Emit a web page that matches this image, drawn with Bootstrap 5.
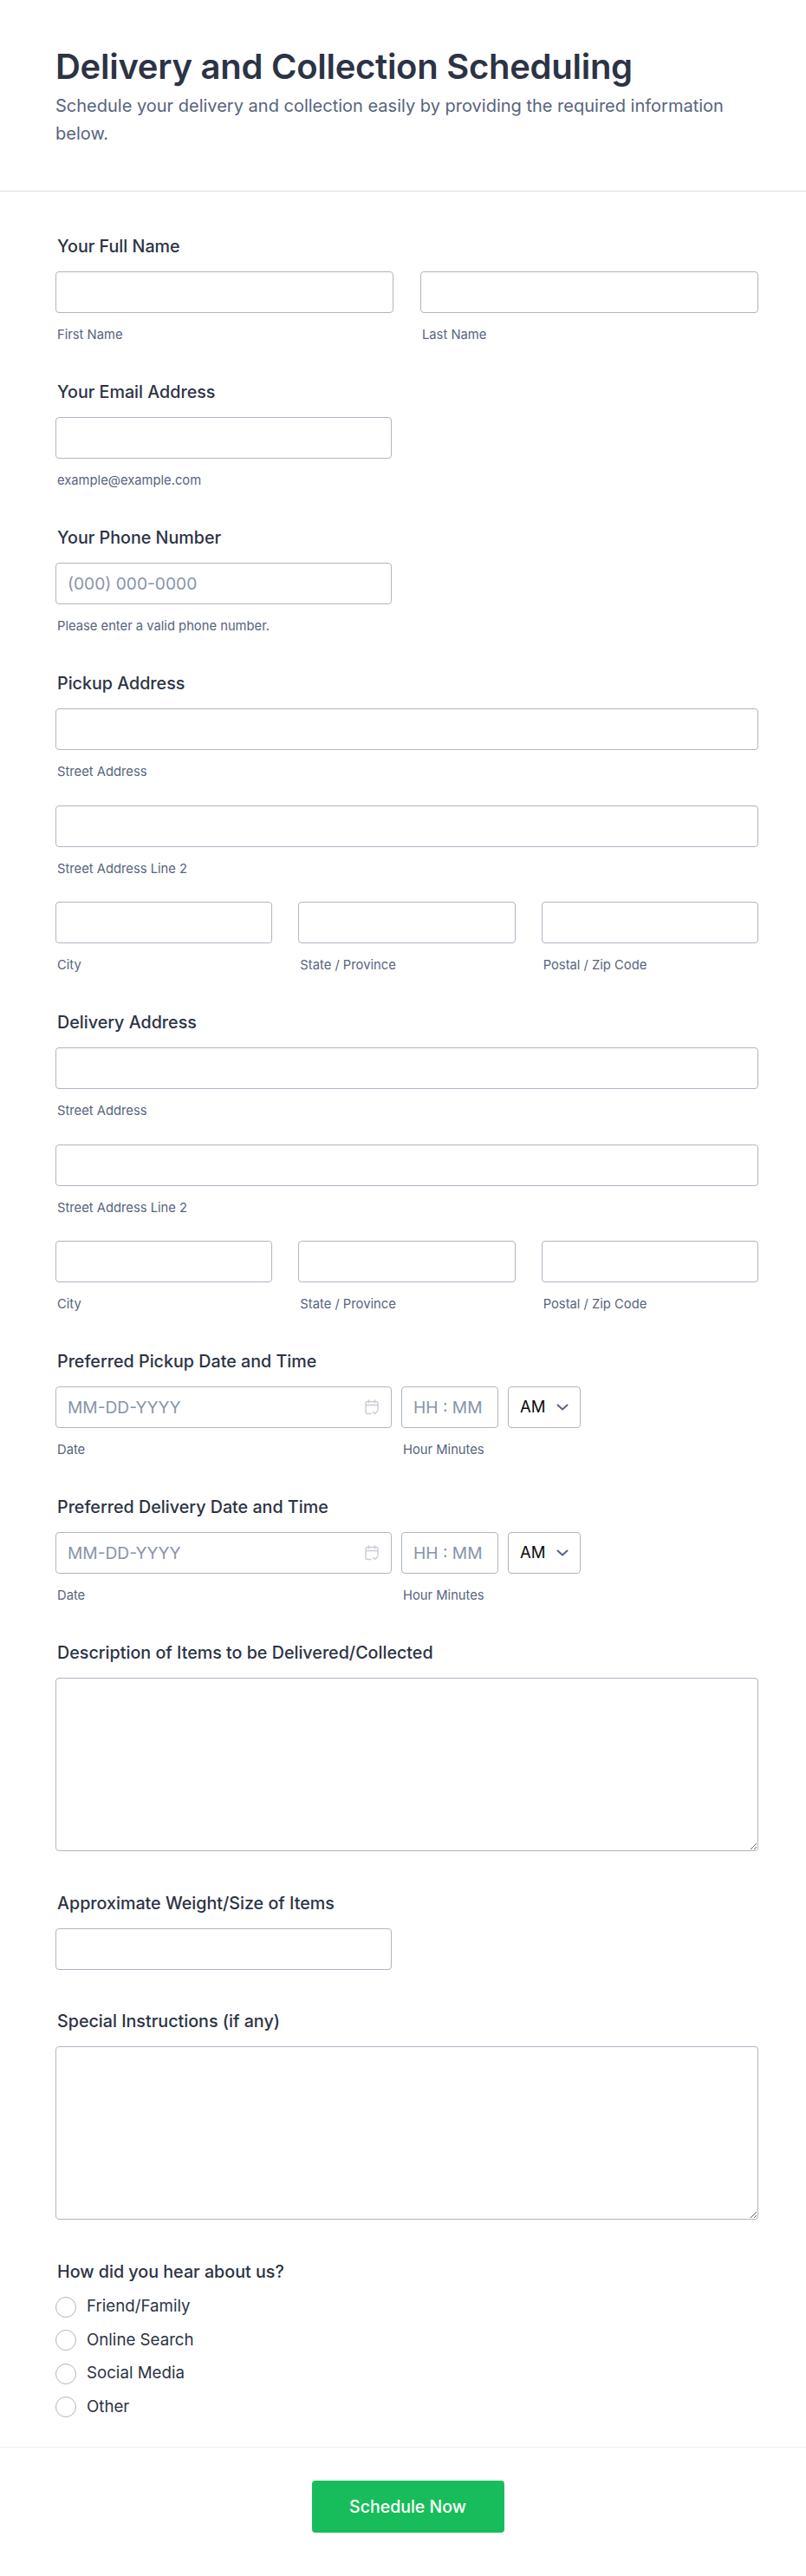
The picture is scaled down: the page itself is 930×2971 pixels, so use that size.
<!DOCTYPE html>
<html lang="en">

<head>
    <meta charset="UTF-8">
    <meta name="viewport" content="width=device-width, initial-scale=1.0">
    <title>Delivery and Collection Scheduling</title>
    <link href="https://cdn.jsdelivr.net/npm/bootstrap@5.3.2/dist/css/bootstrap.min.css" rel="stylesheet">
    <style>
        body { font-family: Inter, "Liberation Sans", sans-serif; color: #2c3345; background: #fff; }
        .form-head { height: 221px; padding: 49px 64px 0; border-bottom: 1px solid #dcdeea; }
        .form-head h1 { font-size: 40px; font-weight: 600; letter-spacing: -0.27px; line-height: 56px; margin: 0 0 1px; color: #2c3345; }
        .form-head p { font-size: 20px; line-height: 32px; margin: 0; color: #57647e; }
        .form-body { padding: 49px 55px 34px 64px; }
        .field { margin-bottom: 42px; }
        .field-bare { margin-bottom: 45.5px; }
        .field-last { margin-bottom: 0; }
        .field-label { display: block; font-size: 19.7px; font-weight: 450; line-height: 28px; margin: 0 0 15px 2px; color: #2c3345; }
        .form-control, .form-select { height: 48px; border: 1px solid #b0b5c3; border-radius: 4px; font-size: 19.2px; color: #2c3345; box-shadow: none; }
        .form-control { padding: 0 13px; }
        .form-control::placeholder { color: #8894ab; }
        textarea.form-control { height: 200px; }
        .half { width: 388px; }
        .sub-label { display: block; font-size: 14.75px; line-height: 20px; margin: 15px 0 0 2px; color: #57647e; }
        .addr-row { margin-bottom: 28.5px; }
        .gut-name { --bs-gutter-x: 31px; }
        .gut-city { --bs-gutter-x: 30px; }
        .date-time { gap: 11px; }
        .date-wrap { width: 388px; }
        .date-icon { right: 15px; top: 15px; width: 16px; height: 18px; }
        .time-wrap { width: 112px; }
        .ampm { width: 84px; font-size: 18.5px; color: #0b0b0b; padding: 0 0 0 13px; background-position: right 12px center; background-size: 16px 16px; background-image: url("data:image/svg+xml,%3csvg xmlns='http://www.w3.org/2000/svg' viewBox='0 0 16 16'%3e%3cpath fill='none' stroke='%2357647e' stroke-width='2' stroke-linecap='round' stroke-linejoin='round' d='M2.500 5.500l5.500 5 5.500-5'/%3e%3c/svg%3e"); }
        .radio-list { margin-top: 1px; }
        .radio-line { display: flex; align-items: center; gap: 12px; height: 24px; margin-bottom: 14.5px; padding: 0; font-size: 18.7px; }
        .radio-line:last-child { margin-bottom: 0; }
        .radio-line .form-check-input { width: 24px; height: 24px; margin: 0; border: 1px solid #b0b5c3; float: none; }
        .radio-line label { color: #2c3345; }
        .form-foot { border-top: 1px solid #eeeff6; padding: 38px 0 49px 11px; text-align: center; }
        .btn-send { width: 222px; height: 60px; padding-top: 8px; background: #18bd5b; border: 0; border-radius: 4px; color: #fff; font-size: 19.5px; font-weight: 500; }
        .btn-send:hover { background: #16a951; color: #fff; }
    </style>
</head>

<body>
    <div class="form-head">
        <h1>Delivery and Collection Scheduling</h1>
        <p>Schedule your delivery and collection easily by providing the required information below.</p>
    </div>

    <div class="form-body">
        <div class="field">
            <label class="field-label">Your Full Name</label>
            <div class="row gut-name">
                <div class="col-6">
                    <input type="text" class="form-control">
                    <span class="sub-label">First Name</span>
                </div>
                <div class="col-6">
                    <input type="text" class="form-control">
                    <span class="sub-label">Last Name</span>
                </div>
            </div>
        </div>

        <div class="field">
            <label class="field-label">Your Email Address</label>
            <input type="email" class="form-control half">
            <span class="sub-label">example@example.com</span>
        </div>

        <div class="field">
            <label class="field-label">Your Phone Number</label>
            <input type="tel" class="form-control half" placeholder="(000) 000-0000">
            <span class="sub-label">Please enter a valid phone number.</span>
        </div>

        <div class="field">
            <label class="field-label">Pickup Address</label>
            <div class="addr-row">
                <input type="text" class="form-control">
                <span class="sub-label">Street Address</span>
            </div>
            <div class="addr-row">
                <input type="text" class="form-control">
                <span class="sub-label">Street Address Line 2</span>
            </div>
            <div class="row gut-city">
                <div class="col-4">
                    <input type="text" class="form-control">
                    <span class="sub-label">City</span>
                </div>
                <div class="col-4">
                    <input type="text" class="form-control">
                    <span class="sub-label">State / Province</span>
                </div>
                <div class="col-4">
                    <input type="text" class="form-control">
                    <span class="sub-label">Postal / Zip Code</span>
                </div>
            </div>
        </div>

        <div class="field">
            <label class="field-label">Delivery Address</label>
            <div class="addr-row">
                <input type="text" class="form-control">
                <span class="sub-label">Street Address</span>
            </div>
            <div class="addr-row">
                <input type="text" class="form-control">
                <span class="sub-label">Street Address Line 2</span>
            </div>
            <div class="row gut-city">
                <div class="col-4">
                    <input type="text" class="form-control">
                    <span class="sub-label">City</span>
                </div>
                <div class="col-4">
                    <input type="text" class="form-control">
                    <span class="sub-label">State / Province</span>
                </div>
                <div class="col-4">
                    <input type="text" class="form-control">
                    <span class="sub-label">Postal / Zip Code</span>
                </div>
            </div>
        </div>

        <div class="field">
            <label class="field-label">Preferred Pickup Date and Time</label>
            <div class="d-flex date-time align-items-start">
                <div class="date-wrap position-relative">
                    <input type="text" class="form-control" placeholder="MM-DD-YYYY">
                    <svg class="date-icon position-absolute" viewBox="0 0 16 18" fill="none" stroke="#c8ccd6" stroke-width="1.400" stroke-linecap="round" stroke-linejoin="round"><path d="M7 16.500H3a2 2 0 0 1-2-2V4.500a2 2 0 0 1 2-2h10a2 2 0 0 1 2 2v7M1 6.500h14M4.500 .7v3M11.500 .7v3M9.500 14.500l2 2 3.500-3.500"/></svg>
                    <span class="sub-label">Date</span>
                </div>
                <div class="time-wrap">
                    <input type="text" class="form-control" placeholder="HH : MM">
                    <span class="sub-label">Hour Minutes</span>
                </div>
                <select class="form-select ampm">
                    <option>AM</option>
                    <option>PM</option>
                </select>
            </div>
        </div>

        <div class="field">
            <label class="field-label">Preferred Delivery Date and Time</label>
            <div class="d-flex date-time align-items-start">
                <div class="date-wrap position-relative">
                    <input type="text" class="form-control" placeholder="MM-DD-YYYY">
                    <svg class="date-icon position-absolute" viewBox="0 0 16 18" fill="none" stroke="#c8ccd6" stroke-width="1.400" stroke-linecap="round" stroke-linejoin="round"><path d="M7 16.500H3a2 2 0 0 1-2-2V4.500a2 2 0 0 1 2-2h10a2 2 0 0 1 2 2v7M1 6.500h14M4.500 .7v3M11.500 .7v3M9.500 14.500l2 2 3.500-3.500"/></svg>
                    <span class="sub-label">Date</span>
                </div>
                <div class="time-wrap">
                    <input type="text" class="form-control" placeholder="HH : MM">
                    <span class="sub-label">Hour Minutes</span>
                </div>
                <select class="form-select ampm">
                    <option>AM</option>
                    <option>PM</option>
                </select>
            </div>
        </div>

        <div class="field-bare">
            <label class="field-label">Description of Items to be Delivered/Collected</label>
            <textarea class="form-control"></textarea>
        </div>

        <div class="field-bare">
            <label class="field-label">Approximate Weight/Size of Items</label>
            <input type="text" class="form-control half">
        </div>

        <div class="field-bare">
            <label class="field-label">Special Instructions (if any)</label>
            <textarea class="form-control"></textarea>
        </div>

        <div class="field-last">
            <label class="field-label">How did you hear about us?</label>
            <div class="radio-list">
                <div class="radio-line form-check">
                    <input class="form-check-input" type="radio" name="heard" id="r1">
                    <label for="r1">Friend/Family</label>
                </div>
                <div class="radio-line form-check">
                    <input class="form-check-input" type="radio" name="heard" id="r2">
                    <label for="r2">Online Search</label>
                </div>
                <div class="radio-line form-check">
                    <input class="form-check-input" type="radio" name="heard" id="r3">
                    <label for="r3">Social Media</label>
                </div>
                <div class="radio-line form-check">
                    <input class="form-check-input" type="radio" name="heard" id="r4">
                    <label for="r4">Other</label>
                </div>
            </div>
        </div>
    </div>

    <div class="form-foot">
        <button type="submit" class="btn btn-send">Schedule Now</button>
    </div>

    <script src="https://cdn.jsdelivr.net/npm/bootstrap@5.3.2/dist/js/bootstrap.bundle.min.js"></script>
</body>

</html>
